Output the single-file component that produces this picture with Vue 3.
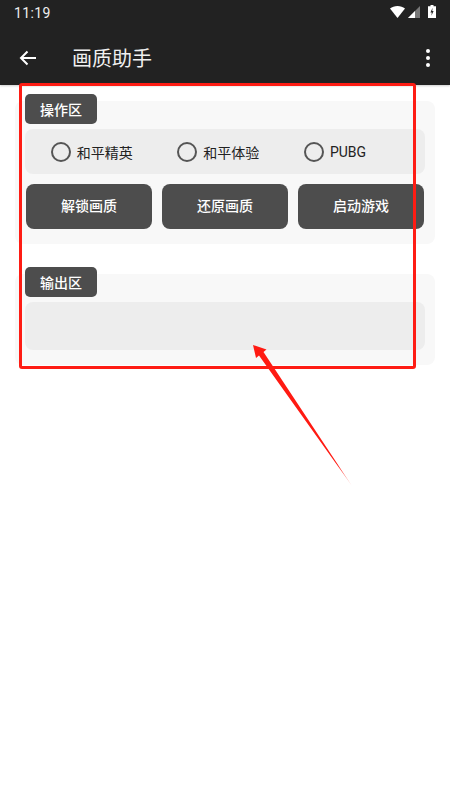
<template>
  <div class="page">
    <header class="appbar">
      <div class="status">
        <span class="time">11:19</span>
        <div class="status-icons">
          <svg width="15" height="12" viewBox="0 0 15 12"><path d="M0 2.600C2 1 4.600 0 7.500 0s5.500 1 7.500 2.600L7.500 12z" fill="#fff" /></svg>
          <svg width="12" height="12" viewBox="0 0 12 12">
            <path d="M0 12 12 0v12z" fill="#777" />
            <path d="M0 12 7 5v7z" fill="#fff" />
          </svg>
          <svg width="8" height="13" viewBox="0 0 8 13">
            <path d="M2.500 0h3v1.300H8V13H0V1.300h2.500z" fill="#fff" />
            <path d="M4.600 2.800 2.400 7.500h1.400l-.4 3.200 2.200-4.600H4.200z" fill="#222" />
          </svg>
        </div>
      </div>
      <div class="toolbar">
        <svg class="back" width="18" height="16" viewBox="0 0 18 16">
          <path d="M17 8H2M8.500 1.500 2 8l6.500 6.500" fill="none" stroke="#fff" stroke-width="2" />
        </svg>
        <h1>画质助手</h1>
        <div class="more"><i></i><i></i><i></i></div>
      </div>
    </header>

    <main class="content">
      <section class="card">
        <div class="chip">操作区</div>
        <div class="radios">
          <label v-for="game in games" :key="game" class="radio">
            <span class="circle"></span>{{ game }}
          </label>
        </div>
        <div class="buttons">
          <button v-for="action in actions" :key="action">{{ action }}</button>
        </div>
      </section>

      <section class="card output">
        <div class="chip">输出区</div>
        <div class="output-box"></div>
      </section>
    </main>

    <div class="highlight"></div>
    <svg class="arrow" width="110" height="145" viewBox="0 0 110 145">
      <defs>
        <linearGradient id="fade" gradientUnits="userSpaceOnUse" x1="2" y1="2" x2="101" y2="143">
          <stop offset="0.85" stop-color="#ff1a12" />
          <stop offset="1" stop-color="#ff1a12" stop-opacity="0.2" />
        </linearGradient>
      </defs>
      <path d="M2 2 15.500 6.500 12.500 9 101 143 8 12.500 5 15z" fill="url(#fade)" />
    </svg>
  </div>
</template>

<script setup>
const games = ['和平精英', '和平体验', 'PUBG']
const actions = ['解锁画质', '还原画质', '启动游戏']
</script>

<style>
body {
  background: #fff;
}
</style>

<style scoped>
.page {
  position: relative;
  height: 800px;
  overflow: hidden;
  background: #fff;
  font-family: "Roboto", "Noto Sans CJK SC", sans-serif;
}
.appbar {
  height: 85px;
  background: #222;
  color: #fff;
  box-shadow: 0 1px 2px rgba(0, 0, 0, 0.2);
}
.status {
  height: 25px;
  padding: 0 14px;
  display: flex;
  align-items: center;
  justify-content: space-between;
}
.time {
  font-size: 14px;
  letter-spacing: 0.4px;
  color: #eee;
}
.status-icons {
  display: flex;
  align-items: center;
  gap: 3px;
  margin-top: -2px;
}
.status-icons svg:last-child {
  margin-left: 5px;
}
.toolbar {
  height: 60px;
  box-sizing: border-box;
  padding: 5px 20px 0 19px;
  display: flex;
  align-items: center;
}
.back {
  flex: none;
}
h1 {
  margin: 0 0 0 35px;
  flex: 1;
  font-size: 20px;
  font-weight: 400;
  color: #f0f0f0;
}
.more {
  display: flex;
  flex-direction: column;
  gap: 3px;
}
.more i {
  width: 4px;
  height: 4px;
  border-radius: 50%;
  background: #fff;
}
.content {
  padding: 16px 15px 0;
}
.card {
  background: #f8f8f8;
  border-radius: 8px;
  padding: 0 10px;
  height: 143px;
}
.output {
  margin-top: 30px;
  height: 91px;
}
.chip {
  width: 72px;
  height: 30px;
  position: relative;
  top: -7px;
  background: #4d4d4d;
  border-radius: 5px;
  color: #fff;
  font-size: 14px;
  font-weight: 500;
  display: flex;
  align-items: center;
  justify-content: center;
}
.radios {
  height: 45px;
  margin-top: -2px;
  background: #ededed;
  border-radius: 8px;
  display: grid;
  grid-template-columns: repeat(3, 126.600px);
  padding-left: 25.700px;
  align-items: center;
}
.radio {
  display: flex;
  align-items: center;
  gap: 6px;
  font-size: 14px;
  color: #222;
}
.circle {
  width: 20px;
  height: 20px;
  box-sizing: border-box;
  border: 2px solid #555;
  border-radius: 50%;
}
.buttons {
  margin: 10px 1px 0;
  display: grid;
  grid-template-columns: repeat(3, 126px);
  gap: 10px;
}
button {
  height: 45px;
  padding: 0 0 3px;
  border: 0;
  border-radius: 8px;
  background: #4d4d4d;
  color: #fff;
  font: 500 14px "Roboto", "Noto Sans CJK SC", sans-serif;
}
.output-box {
  height: 48px;
  margin-top: -2px;
  background: #ededed;
  border-radius: 8px;
}
.highlight {
  position: absolute;
  left: 19px;
  top: 83px;
  width: 397px;
  height: 286px;
  box-sizing: border-box;
  border: 3px solid #fe1c14;
  border-radius: 3px;
}
.arrow {
  position: absolute;
  left: 251px;
  top: 343px;
}
</style>
